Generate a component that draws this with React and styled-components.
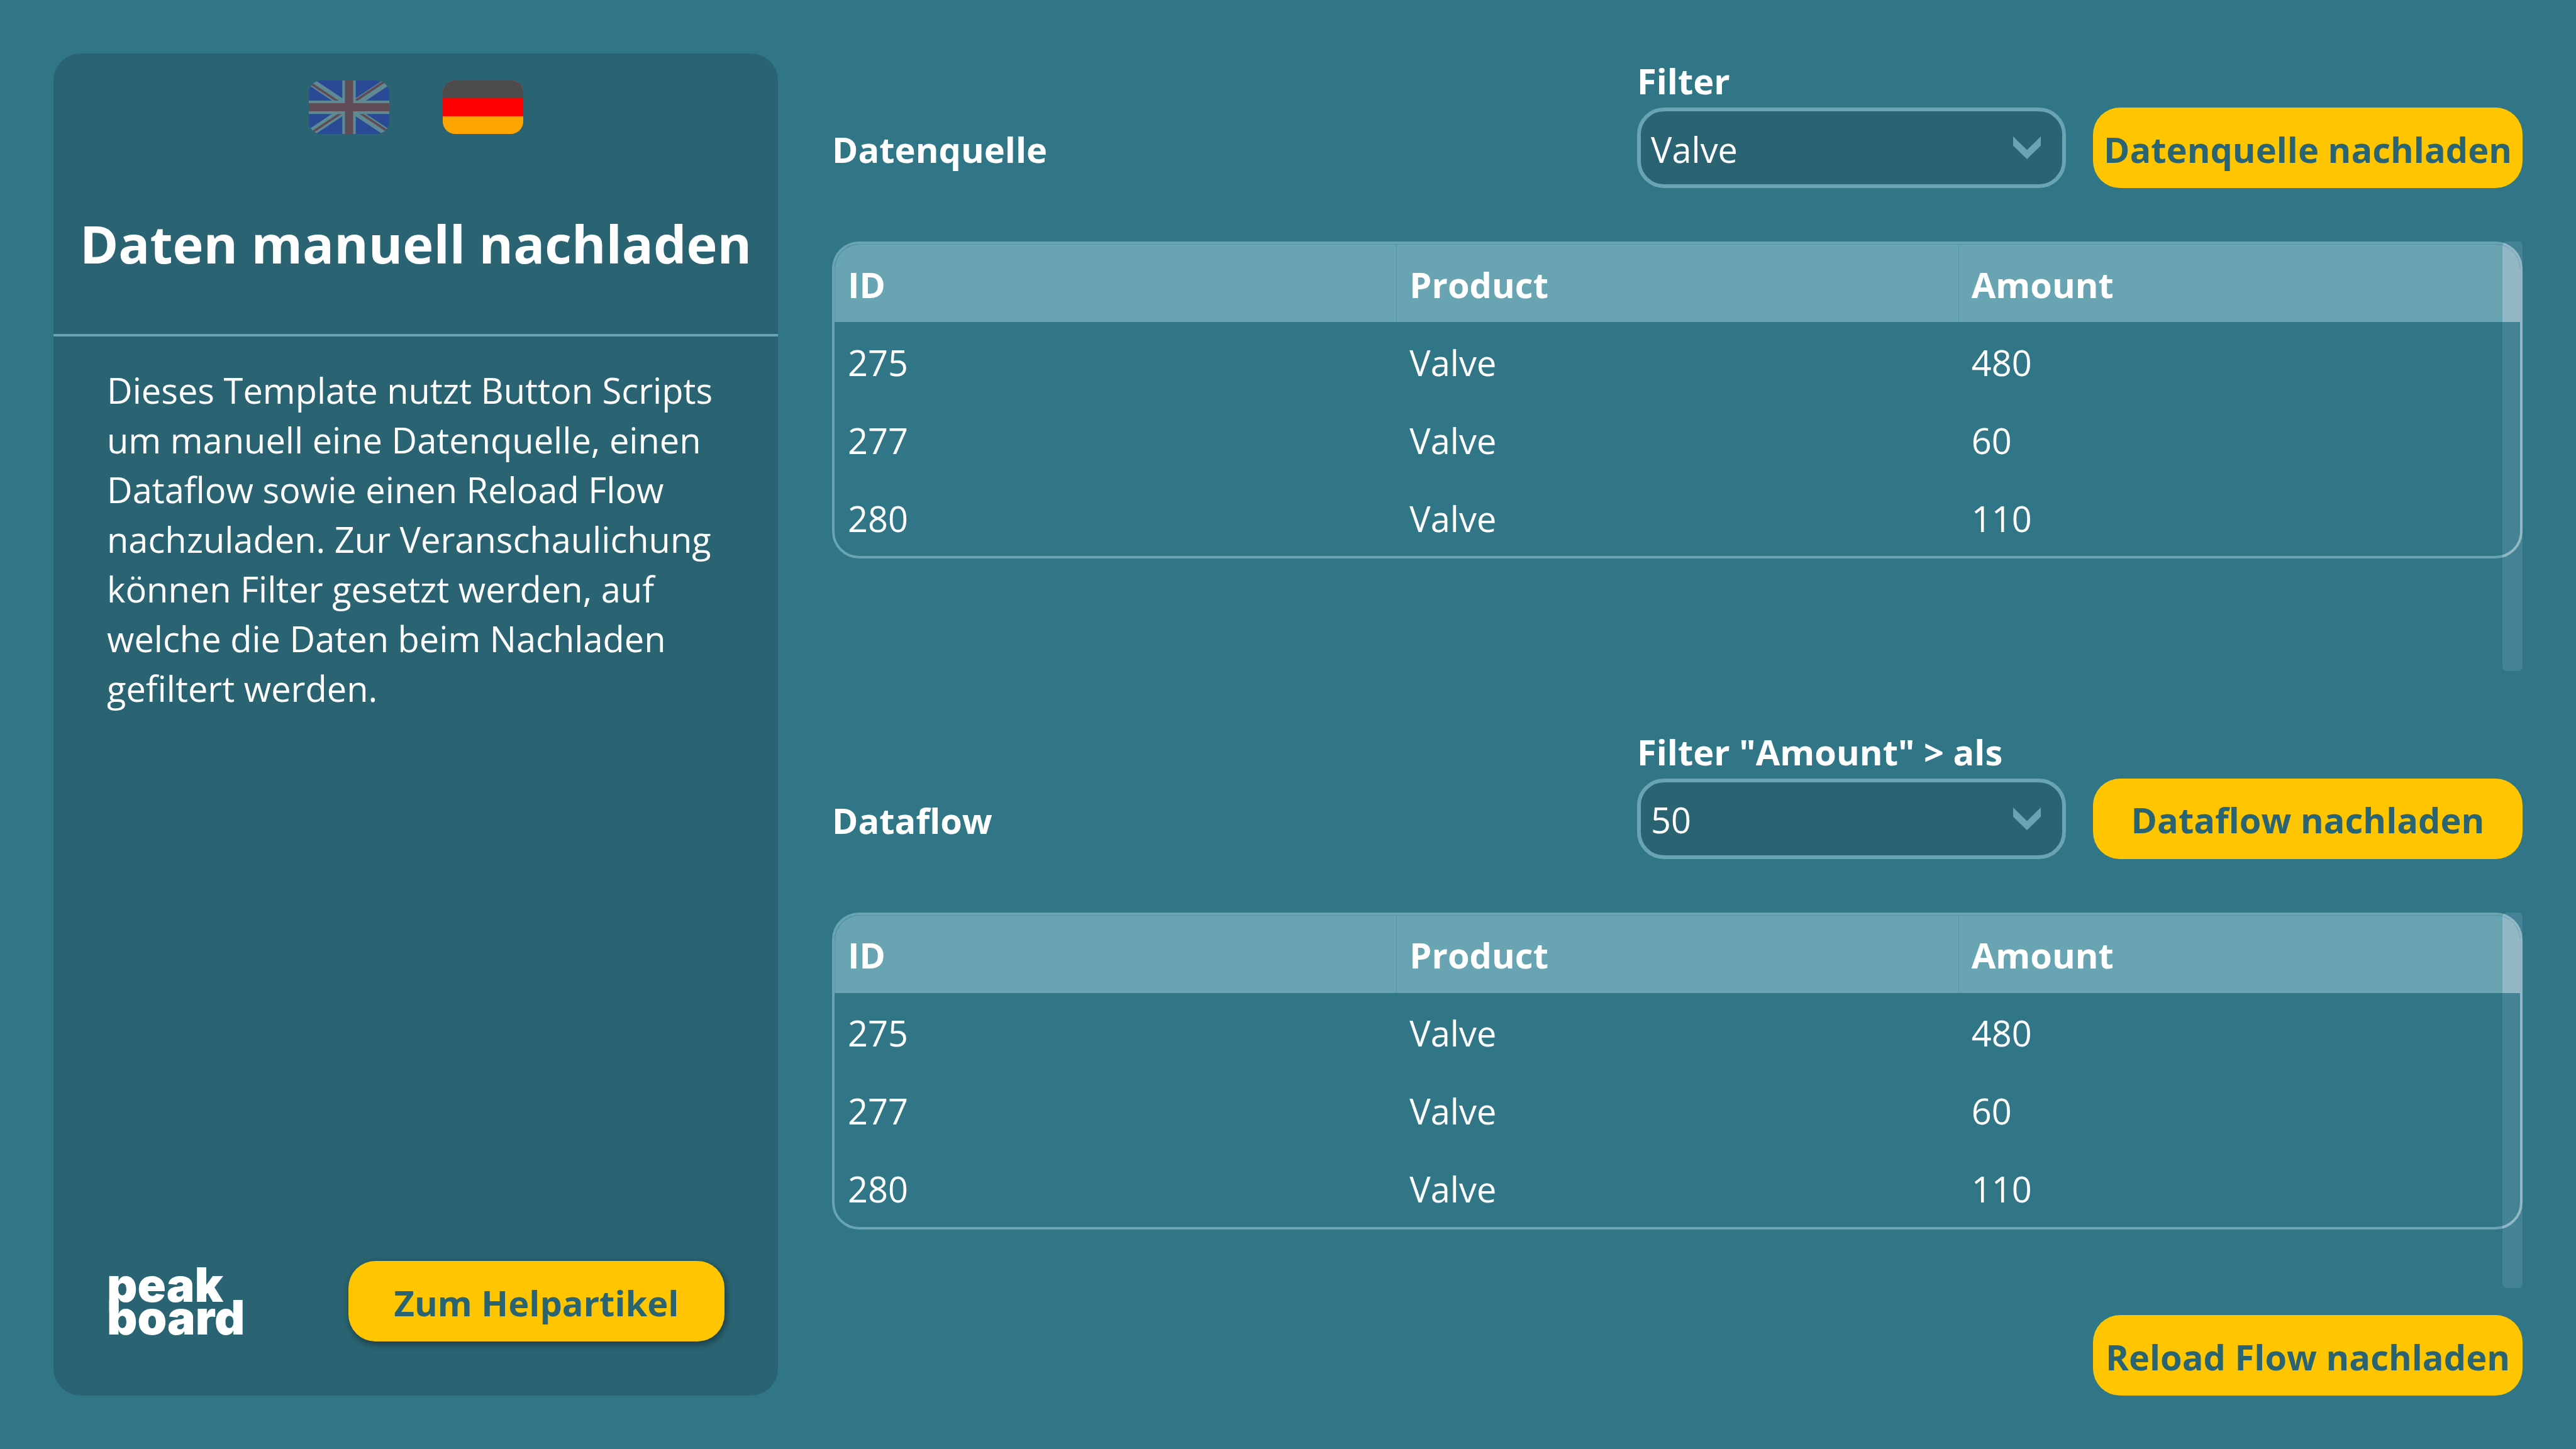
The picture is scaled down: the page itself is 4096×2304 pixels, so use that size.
import React, { useState } from "react";
import styled, { createGlobalStyle, css } from "styled-components";

const color = {
  page: "#317687",
  panel: "#2a6472",
  line: "#69a4b2",
  hairline: "#5896a5",
  accent: "#ffc600",
  text: "#ffffff",
};

const GlobalStyle = createGlobalStyle`
  *, *::before, *::after { box-sizing: border-box; }
  body {
    margin: 0;
    background: ${color.page};
    color: ${color.text};
    font-family: "Open Sans", "Noto Sans", sans-serif;
    font-size: 56px;
    line-height: 79px;
  }
  button, select { font: inherit; }
`;

const Page = styled.div`
  display: grid;
  grid-template-columns: 1152px minmax(0, 1fr);
  gap: 86px;
  min-height: 100vh;
  padding: 85px;
`;

const Sidebar = styled.aside`
  display: flex;
  flex-direction: column;
  background: ${color.panel};
  border-radius: 43px;
`;

const SidebarHeader = styled.header`
  display: flex;
  flex-direction: column;
  align-items: center;
  padding: 43px 0 88px;
  border-bottom: 4px solid ${color.line};
`;

const Languages = styled.div`
  display: flex;
  gap: 85px;
  margin-bottom: 118px;
`;

const LanguageButton = styled.button`
  width: 128px;
  height: 85px;
  padding: 0;
  border: 0;
  border-radius: 20px;
  background: none;
  overflow: hidden;
  cursor: pointer;

  svg {
    display: block;
    width: 100%;
    height: 100%;
  }
`;

const Title = styled.h1`
  margin: 0;
  font-size: 83px;
  line-height: 112px;
  font-weight: 700;
  white-space: nowrap;
`;

const Description = styled.p`
  margin: 0;
  padding: 46px 85px;
`;

const SidebarFooter = styled.footer`
  display: flex;
  align-items: center;
  justify-content: space-between;
  margin-top: auto;
  padding: 0 85px 86px;
`;

const Logo = styled.div`
  font-family: Inter, sans-serif;
  font-size: 75px;
  font-weight: 900;
  line-height: 52px;
`;

const LogoLine = styled.span`
  display: block;
`;

const Button = styled.button`
  width: ${(p) => (p.$size === "small" ? "598px" : "683px")};
  height: 128px;
  padding: 4px 0 0;
  border: 0;
  border-radius: 43px;
  background: ${color.accent};
  color: ${color.panel};
  font-weight: 700;
  white-space: nowrap;
  cursor: pointer;
  ${(p) =>
    p.$raised &&
    css`
      box-shadow: 2px 4px 12px rgba(0, 0, 0, 0.45);
    `}
`;

const Main = styled.main`
  display: flex;
  flex-direction: column;
`;

const Section = styled.section`
  display: contents;
`;

const Toolbar = styled.div`
  display: flex;
  align-items: flex-end;
  gap: 43px;
  margin-bottom: 85px;
`;

const SectionTitle = styled.h2`
  flex: 1;
  margin: 0;
  padding-top: 4px;
  font-size: 56px;
  line-height: 124px;
  font-weight: 700;
`;

const Field = styled.div`
  width: 682px;
`;

const FieldLabel = styled.label`
  display: block;
  line-height: 86px;
  font-weight: 700;
  white-space: nowrap;
`;

const SelectBox = styled.div`
  position: relative;
`;

const Select = styled.select`
  display: block;
  width: 100%;
  height: 128px;
  padding: 4px 100px 0 16px;
  appearance: none;
  border: 6px solid ${color.line};
  border-radius: 43px;
  background: ${color.panel};
  color: ${color.text};
  outline: none;
`;

const Chevron = styled.svg`
  position: absolute;
  top: 46px;
  right: 40px;
  width: 44px;
  height: 36px;
  fill: ${color.line};
  pointer-events: none;
`;

const List = styled.div`
  position: relative;
  flex: ${(p) => p.$grow} 1 0;
  margin-bottom: ${(p) => p.$gap}px;
`;

const ScrollTrack = styled.div`
  position: absolute;
  top: 0;
  right: 0;
  bottom: 0;
  width: 32px;
  border-radius: 7px;
  background: rgb(72, 26, 24);
  mix-blend-mode: color-dodge;
`;

const TableFrame = styled.div`
  border: 4px solid ${color.line};
  border-radius: 43px;
  overflow: hidden;
`;

const Table = styled.table`
  width: 100%;
  table-layout: fixed;
  border-collapse: separate;
  border-spacing: 0;
`;

const HeadCell = styled.th`
  height: 124px;
  padding: 4px 21px 0;
  background: ${color.line};
  box-shadow: inset 0 1px ${color.hairline};
  text-align: left;
  font-weight: 700;

  & + & {
    box-shadow: inset 1px 1px ${color.hairline};
  }
  &:first-child {
    border-top-left-radius: 39px;
    box-shadow: inset 1px 1px ${color.hairline};
  }
  &:last-child {
    border-top-right-radius: 39px;
  }
`;

const Cell = styled.td`
  height: 124px;
  padding: 4px 21px 0;
`;

const Actions = styled.div`
  display: flex;
  justify-content: flex-end;
`;

const rows = [
  { id: 275, product: "Valve", amount: 480 },
  { id: 277, product: "Valve", amount: 60 },
  { id: 280, product: "Valve", amount: 110 },
];

function UnionFlag() {
  return (
    <svg viewBox="0 0 480 320" preserveAspectRatio="none" aria-hidden="true">
      <rect width="480" height="320" fill="#2b4a96" />
      <path d="M0 0L480 320M480 0L0 320" stroke="#5f8a94" strokeWidth="46" />
      <path
        d="M-10 3L200 143M280 120L490 -20M200 190L-10 330M280 177L490 317"
        stroke="#5f4c56"
        strokeWidth="14"
      />
      <path d="M240 0V320M0 160H480" stroke="#5f8a94" strokeWidth="80" />
      <path d="M240 0V320M0 160H480" stroke="#5f4c56" strokeWidth="49" />
    </svg>
  );
}

function GermanFlag() {
  return (
    <svg viewBox="0 0 480 320" preserveAspectRatio="none" aria-hidden="true">
      <rect width="480" height="320" fill="#ffa500" />
      <rect width="480" height="214" fill="#ff0000" />
      <rect width="480" height="106" fill="#4b4b4b" />
    </svg>
  );
}

function FilterField({ id, label, options }) {
  const [value, setValue] = useState(options[0]);
  return (
    <Field>
      <FieldLabel htmlFor={id}>{label}</FieldLabel>
      <SelectBox>
        <Select id={id} value={value} onChange={(e) => setValue(e.target.value)}>
          {options.map((option) => (
            <option key={option}>{option}</option>
          ))}
        </Select>
        <Chevron viewBox="0 0 44 36" aria-hidden="true">
          <path d="M0 0L22 21.5L44 0V14.5L22 36L0 14.5Z" />
        </Chevron>
      </SelectBox>
    </Field>
  );
}

function DataTable({ grow, gap }) {
  return (
    <List $grow={grow} $gap={gap}>
      <TableFrame>
        <Table>
          <thead>
            <tr>
              <HeadCell scope="col">ID</HeadCell>
              <HeadCell scope="col">Product</HeadCell>
              <HeadCell scope="col">Amount</HeadCell>
            </tr>
          </thead>
          <tbody>
            {rows.map((row) => (
              <tr key={row.id}>
                <Cell>{row.id}</Cell>
                <Cell>{row.product}</Cell>
                <Cell>{row.amount}</Cell>
              </tr>
            ))}
          </tbody>
        </Table>
      </TableFrame>
      <ScrollTrack />
    </List>
  );
}

function DataSection({ title, filter, action, grow, gap }) {
  return (
    <Section>
      <Toolbar>
        <SectionTitle>{title}</SectionTitle>
        <FilterField {...filter} />
        <Button type="button">{action}</Button>
      </Toolbar>
      <DataTable grow={grow} gap={gap} />
    </Section>
  );
}

export default function App() {
  return (
    <>
      <GlobalStyle />
      <Page>
        <Sidebar>
          <SidebarHeader>
            <Languages>
              <LanguageButton type="button" aria-label="English">
                <UnionFlag />
              </LanguageButton>
              <LanguageButton type="button" aria-label="Deutsch">
                <GermanFlag />
              </LanguageButton>
            </Languages>
            <Title>Daten manuell nachladen</Title>
          </SidebarHeader>
          <Description>
            Dieses Template nutzt Button Scripts um manuell eine Datenquelle, einen Dataflow
            sowie einen Reload Flow nachzuladen. Zur Veranschaulichung können Filter gesetzt
            werden, auf welche die Daten beim Nachladen gefiltert werden.
          </Description>
          <SidebarFooter>
            <Logo>
              <LogoLine>peak</LogoLine>
              <LogoLine>board</LogoLine>
            </Logo>
            <Button type="button" $size="small" $raised>
              Zum Helpartikel
            </Button>
          </SidebarFooter>
        </Sidebar>
        <Main>
          <DataSection
            title="Datenquelle"
            filter={{ id: "filter-product", label: "Filter", options: ["Valve"] }}
            action="Datenquelle nachladen"
            grow={8}
            gap={85}
          />
          <DataSection
            title="Dataflow"
            filter={{ id: "filter-amount", label: 'Filter "Amount" > als', options: ["50"] }}
            action="Dataflow nachladen"
            grow={7}
            gap={43}
          />
          <Actions>
            <Button type="button">Reload Flow nachladen</Button>
          </Actions>
        </Main>
      </Page>
    </>
  );
}
